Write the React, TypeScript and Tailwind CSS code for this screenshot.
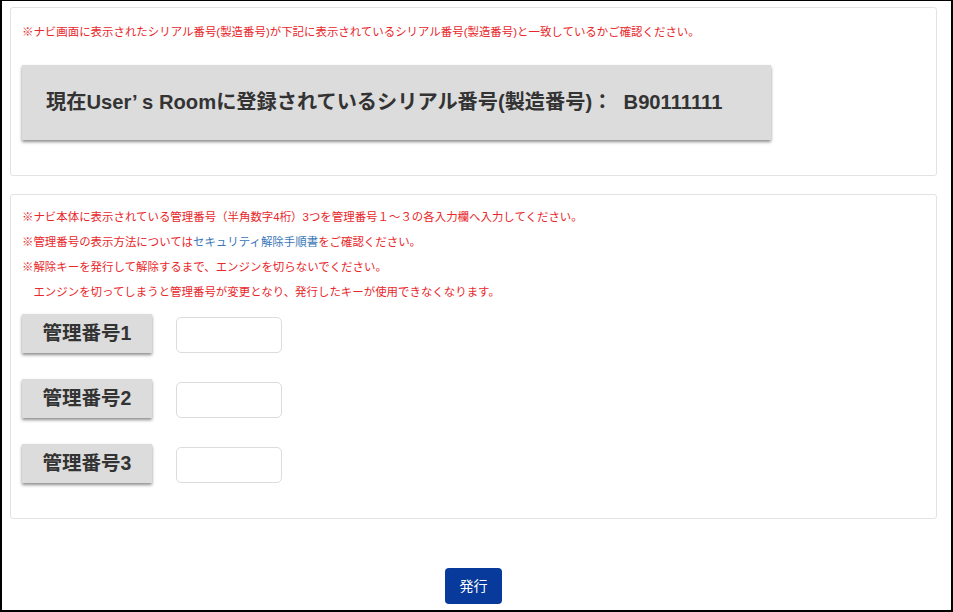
import React from 'react';

const font = { fontFamily: '"Liberation Sans", "Noto Sans CJK JP", sans-serif' };

const fields = ['管理番号1', '管理番号2', '管理番号3'];

const App: React.FC = () => {
  return (
    <div
      className="w-[953px] h-[612px] bg-white border-black border-t border-l-2 border-r-2 border-b-2 pl-[8px] pt-[6px] text-[#333]"
      style={font}
    >
      {/* serial number card */}
      <div className="w-[927px] border border-[#e3e3e3] rounded-[3px] pl-[11px] pt-[14px] pb-[35px]">
        <p className="text-[11.45px] leading-[20px] text-[#e8272b]">
          ※ナビ画面に表示されたシリアル番号(製造番号)が下記に表示されているシリアル番号(製造番号)と一致しているかご確認ください。
        </p>
        <div className="mt-[23px] w-[749px] h-[75px] bg-[#dcdcdc] shadow-[0_2px_3px_rgba(0,0,0,0.45)] flex items-center pl-[24px]">
          <span className="text-[20.2px] font-bold text-[#333] whitespace-nowrap">
            現在User’ s Roomに登録されているシリアル番号(製造番号)：&nbsp; B90111111
          </span>
        </div>
      </div>

      {/* management number card */}
      <div className="mt-[18px] w-[927px] border border-[#e3e3e3] rounded-[3px] pl-[11px] pt-[10px] pb-[35px]">
        <div className="text-[11.45px] leading-[25px] text-[#e8272b]">
          <p>※ナビ本体に表示されている管理番号（半角数字4桁）3つを管理番号１～３の各入力欄へ入力してください。</p>
          <p>
            ※管理番号の表示方法については
            <a href="#" className="text-[#3a77b8]">セキュリティ解除手順書</a>
            をご確認ください。
          </p>
          <p>※解除キーを発行して解除するまで、エンジンを切らないでください。</p>
          <p>　エンジンを切ってしまうと管理番号が変更となり、発行したキーが使用できなくなります。</p>
        </div>

        <div className="mt-[9px] flex flex-col gap-[26px]">
          {fields.map(f => (
            <div key={f} className="flex items-end gap-[24px]">
              <div className="w-[130px] h-[39px] bg-[#dcdcdc] shadow-[0_2px_3px_rgba(0,0,0,0.45)] flex items-center justify-center">
                <span className="text-[19.5px] font-bold text-[#333]">{f}</span>
              </div>
              <input
                type="text"
                className="w-[106px] h-[36px] border border-[#dcdcdc] rounded-[5px] outline-none px-2 text-sm"
              />
            </div>
          ))}
        </div>
      </div>

      {/* submit */}
      <div className="w-[927px] flex justify-center mt-[49px]">
        <button className="w-[57px] h-[36px] rounded-[4px] bg-[#073a9a] text-white text-[14px]">
          発行
        </button>
      </div>
    </div>
  );
};

export default App;
